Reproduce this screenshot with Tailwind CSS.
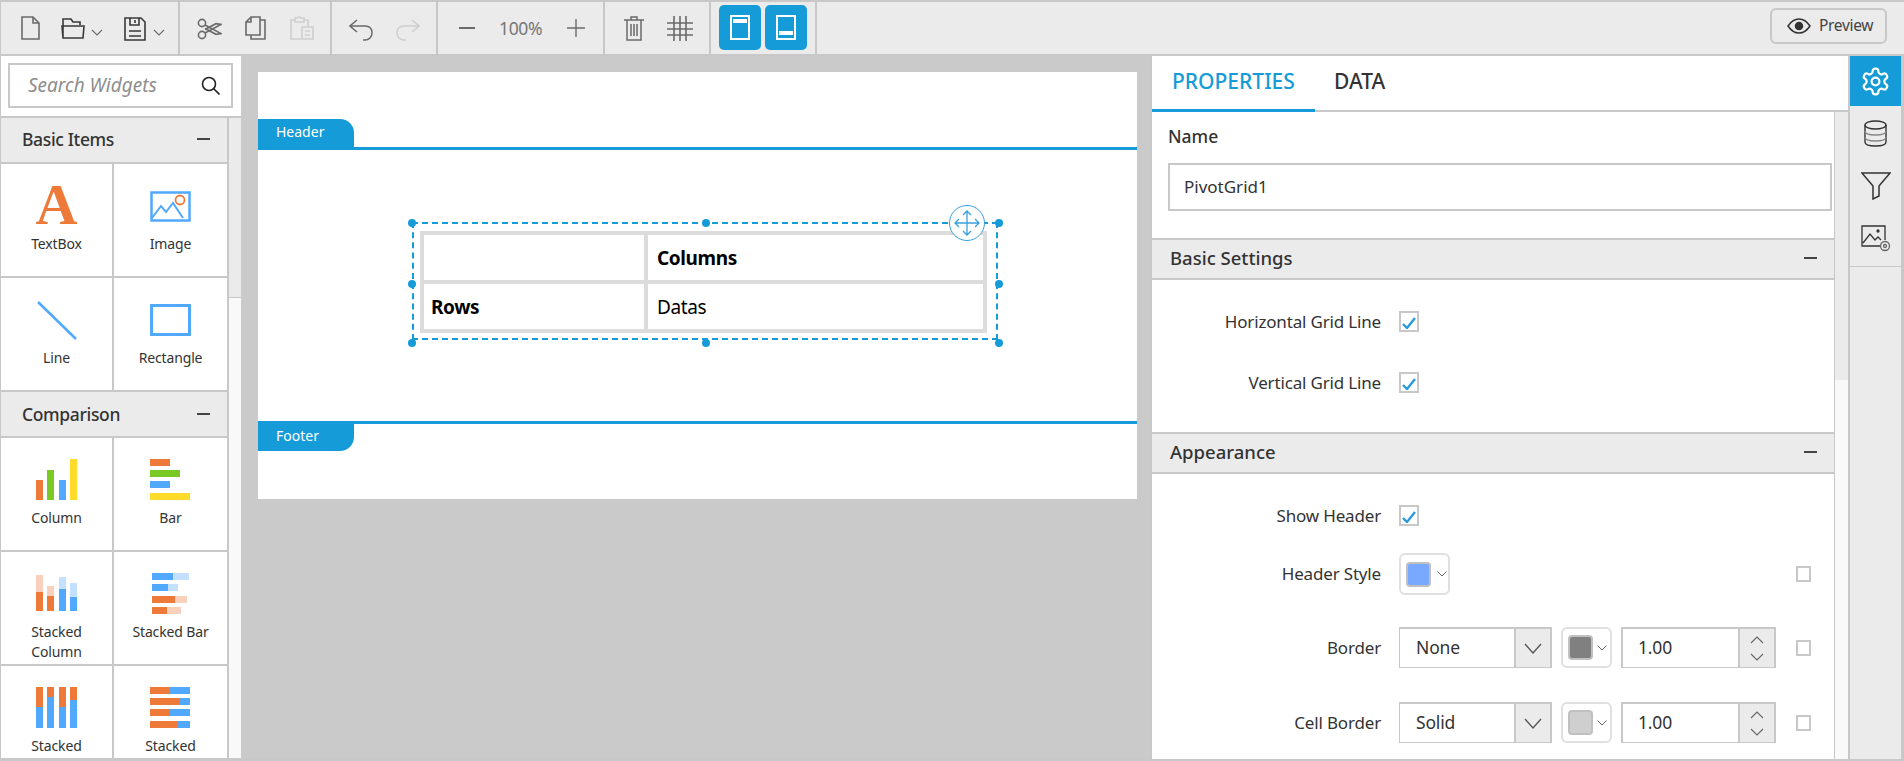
<!doctype html>
<html>
<head>
<meta charset="utf-8">
<script src="https://cdn.jsdelivr.net/npm/@tailwindcss/browser@4"></script>
</head>
<body class="m-0">
<div class="w-[1904px] h-[761px] overflow-hidden flex flex-col bg-[#c8c8c8] text-[#333] [font-family:'Noto_Sans',sans-serif]">
  <!-- toolbar -->
  <div class="h-[52px] mt-[2px] shrink-0 flex bg-[#ebebeb] text-[#6b6b6b] border-l border-[#c8c8c8]">
    <div class="w-[179px] relative border-r-2 border-[#c8c8c8] flex items-start">
      <svg class="mt-[14px] ml-[20px]" width="19" height="24" viewBox="0 0 19 24" fill="none" stroke="#6b6b6b" stroke-width="1.6"><path d="M1 1h11l6 6v16H1zM12 1v6h6"/></svg>
      <svg class="mt-[15px] ml-[21px]" width="24" height="22" viewBox="0 0 24 22" fill="none" stroke="#3a3a3a" stroke-width="1.6"><path d="M2 20V2h8l2 3h7v3M1 9h22l-1 12H2z"/></svg>
      <svg class="mt-[27px] ml-[6px]" width="12" height="7" viewBox="0 0 12 7" fill="none" stroke="#6b6b6b" stroke-width="1.1"><path d="M1 1l5 5 5-5"/></svg>
      <svg class="mt-[15px] ml-[21px]" width="22" height="24" viewBox="0 0 22 24" fill="none" stroke="#3a3a3a" stroke-width="1.6"><path d="M1 1h16l4 4v18H1zM6 1v7h9V1M11 3v3M5 14h12M5 19h12"/></svg>
      <svg class="mt-[27px] ml-[7px]" width="12" height="7" viewBox="0 0 12 7" fill="none" stroke="#6b6b6b" stroke-width="1.1"><path d="M1 1l5 5 5-5"/></svg>
    </div>
    <div class="w-[152px] border-r-2 border-[#c8c8c8] flex items-start">
      <svg class="mt-[16px] ml-[17px]" width="25" height="22" viewBox="0 0 25 22" fill="none" stroke="#6b6b6b" stroke-width="1.6"><circle cx="5" cy="5" r="3.6"/><circle cx="5" cy="17" r="3.6"/><path d="M8 7l16 8.5-5 .8L8 10.5M8 15l16-8.5-5-.8L8 11.5"/></svg>
      <svg class="mt-[14px] ml-[23px]" width="21" height="24" viewBox="0 0 21 24" fill="none" stroke="#6b6b6b" stroke-width="1.6"><path d="M1 6l5-5h9v18H1zM6 1v5H1M15 4h5v19H6v-4"/></svg>
      <svg class="mt-[14px] ml-[24px]" width="24" height="24" viewBox="0 0 24 24" fill="none" stroke="#cfcfcf" stroke-width="1.6"><path d="M5 4H1v19h11M14 4h4v7M5 2h3l1-1h1l1 1h3v4H5zM12 11h11v12H12zM15 15h5M15 19h5"/></svg>
    </div>
    <div class="w-[106px] border-r-2 border-[#c8c8c8] flex items-start">
      <svg class="mt-[17px] ml-[17px]" width="25" height="22" viewBox="0 0 25 22" fill="none" stroke="#6b6b6b" stroke-width="1.5"><path d="M8 1L1 7l7 6M1 7h15c5 0 7 3 7 7s-3 7-7 7h-2"/></svg>
      <svg class="mt-[17px] ml-[21px]" width="25" height="22" viewBox="0 0 25 22" fill="none" stroke="#cfcfcf" stroke-width="1.5"><path d="M17 1l7 6-7 6M24 7H9c-5 0-7 3-7 7s3 7 7 7h2"/></svg>
    </div>
    <div class="w-[167px] border-r-2 border-[#c8c8c8] flex items-start">
      <div class="mt-[25px] ml-[21px] w-[16px] h-[1.5px] bg-[#6b6b6b]"></div>
      <div class="mt-[14px] ml-[24px] w-[44px] text-[17.5px] leading-[24px] text-[#777] tracking-[-0.02em]">100%</div>
      <svg class="mt-[17px] ml-[24px]" width="18" height="18" viewBox="0 0 18 18" fill="none" stroke="#6b6b6b" stroke-width="1.4"><path d="M9 0v18M0 9h18"/></svg>
    </div>
    <div class="w-[106px] border-r-2 border-[#c8c8c8] flex items-start">
      <svg class="mt-[14px] ml-[19px]" width="20" height="25" viewBox="0 0 20 25" fill="none" stroke="#6b6b6b" stroke-width="1.5"><path d="M0 4h20M7 4V1h6v3M3 4v20h14V4M7 8v12M10 8v12M13 8v12"/></svg>
      <svg class="mt-[14px] ml-[23px]" width="26" height="25" viewBox="0 0 26 25" fill="none" stroke="#6b6b6b" stroke-width="1.6"><path d="M7 0v25M13 0v25M19 0v25M0 7h26M0 13h26M0 19h26"/></svg>
    </div>
    <div class="w-[106px] border-r-2 border-[#c8c8c8] flex items-start gap-[4px] pl-[8px] pt-[3px]">
      <div class="w-[42px] h-[45px] rounded-[5px] bg-[#169bd9] flex items-center justify-center">
        <div class="w-[20px] h-[25px] border-2 border-white pt-[2px] px-[1px]"><div class="h-[4px] bg-white"></div></div>
      </div>
      <div class="w-[42px] h-[45px] rounded-[5px] bg-[#169bd9] flex items-center justify-center">
        <div class="w-[20px] h-[25px] border-2 border-white pt-[14px] px-[1px]"><div class="h-[4px] bg-white"></div></div>
      </div>
    </div>
    <div class="flex-1 flex justify-end items-start pt-[6px] pr-[17px]">
      <div class="w-[117px] h-[36px] border-2 border-[#c8c8c8] rounded-[6px] flex items-center pl-[15px] gap-[8px] text-[#444]">
        <svg width="24" height="16" viewBox="0 0 24 16" fill="none" stroke="#333" stroke-width="1.5"><path d="M1 8c3-4.500 7-7 11-7s8 2.500 11 7c-3 4.500-7 7-11 7S4 12.500 1 8z"/><circle cx="12" cy="8" r="3.500" fill="#333"/></svg>
        <span class="text-[15.5px] tracking-[-0.02em]">Preview</span>
      </div>
    </div>
  </div>
  <!-- main -->
  <div class="flex mt-[2px] h-[703px] shrink-0 overflow-hidden">
    <!-- widgets panel -->
    <div class="w-[241px] shrink-0 flex flex-col border-l border-[#c8c8c8]">
      <div class="h-[60px] shrink-0 bg-white pl-[7px] pt-[7px]">
        <div class="w-[225px] h-[45px] border-2 border-[#c8c8c8] flex items-center pl-[18px] pr-[11px] justify-between">
          <span class="italic text-[19px] text-[#8e8e8e]">Search Widgets</span>
          <svg width="19" height="19" viewBox="0 0 19 19" fill="none" stroke="#222" stroke-width="1.6"><circle cx="8" cy="8" r="6.500"/><path d="M12.500 12.500l6 6"/></svg>
        </div>
      </div>
      <div class="h-[2px] shrink-0"></div>
      <div class="flex h-[640px] shrink-0 overflow-hidden">
        <div class="w-[228px] shrink-0 border-r-2 border-[#c8c8c8] flex flex-col gap-[2px] overflow-hidden text-center text-[14px] leading-[20px] tracking-[-0.01em]">
          <div class="h-[44px] shrink-0 bg-[#ebebeb] flex items-center justify-between pl-[21px] pr-[17px] pb-[2px] text-[17.5px] tracking-[-0.02em] font-medium text-left"><span>Basic Items</span><span class="w-[13px] h-[2px] bg-[#444]"></span></div>
          <div class="grid grid-cols-[111px_113px] gap-[2px] auto-rows-[112px] shrink-0">
            <div class="bg-white flex flex-col items-center pt-[18px]">
              <div class="h-[45px] text-[#ee7a3a] font-bold text-[58px] leading-[45px] tracking-normal [font-family:'Liberation_Serif',serif]">A</div>
              <div class="mt-[7px]">TextBox</div>
            </div>
            <div class="bg-white flex flex-col items-center pt-[21px]">
              <svg width="44" height="42" viewBox="0 0 44 42" fill="none"><rect x="2.500" y="7.500" width="38" height="28" stroke="#51a8ff" stroke-width="2.500"/><path d="M3 33l9-12 5 6 7-9 10 15" stroke="#51a8ff" stroke-width="2"/><circle cx="31" cy="15" r="4.500" stroke="#ee7a3a" stroke-width="1.800"/></svg>
              <div class="mt-[7px]">Image</div>
            </div>
            <div class="bg-white flex flex-col items-center pt-[21px]">
              <svg width="44" height="42" viewBox="0 0 44 42" fill="none"><path d="M3 3l38 37" stroke="#51a8ff" stroke-width="2.500"/></svg>
              <div class="mt-[7px]">Line</div>
            </div>
            <div class="bg-white flex flex-col items-center pt-[21px]">
              <svg width="44" height="42" viewBox="0 0 44 42" fill="none"><rect x="2.500" y="6.500" width="38" height="29" stroke="#51a8ff" stroke-width="3"/></svg>
              <div class="mt-[7px]">Rectangle</div>
            </div>
          </div>
          <div class="h-[44px] shrink-0 bg-[#ebebeb] flex items-center justify-between pl-[21px] pr-[17px] text-[17.5px] tracking-[-0.02em] font-medium text-left"><span>Comparison</span><span class="w-[13px] h-[2px] bg-[#444]"></span></div>
          <div class="grid grid-cols-[111px_113px] gap-[2px] auto-rows-[112px] shrink-0">
            <div class="bg-white flex flex-col items-center pt-[21px]">
              <svg width="44" height="42" viewBox="0 0 44 42"><rect x="1" y="21" width="7" height="20" fill="#ee7a3a"/><rect x="12" y="11" width="7" height="30" fill="#7ac925"/><rect x="24" y="21" width="7" height="20" fill="#51a8ff"/><rect x="35" y="0" width="7" height="41" fill="#ffdb2c"/></svg>
              <div class="mt-[7px]">Column</div>
            </div>
            <div class="bg-white flex flex-col items-center pt-[21px]">
              <svg width="44" height="42" viewBox="0 0 44 42"><rect x="1" y="0" width="20" height="7" fill="#ee7a3a"/><rect x="1" y="11" width="30" height="7" fill="#7ac925"/><rect x="1" y="22" width="20" height="7" fill="#51a8ff"/><rect x="1" y="34" width="40" height="7" fill="#ffdb2c"/></svg>
              <div class="mt-[7px]">Bar</div>
            </div>
            <div class="bg-white flex flex-col items-center pt-[21px]">
              <svg width="44" height="42" viewBox="0 0 44 42"><rect x="1" y="2" width="7" height="17" fill="#f9d0bb"/><rect x="1" y="19" width="7" height="19" fill="#ee7a3a"/><rect x="12" y="13" width="7" height="10" fill="#f9d0bb"/><rect x="12" y="23" width="7" height="15" fill="#ee7a3a"/><rect x="24" y="4" width="7" height="12" fill="#c4e0ff"/><rect x="24" y="16" width="7" height="22" fill="#51a8ff"/><rect x="35" y="10" width="7" height="14" fill="#c4e0ff"/><rect x="35" y="24" width="7" height="14" fill="#51a8ff"/></svg>
              <div class="mt-[7px] w-[70px]">Stacked Column</div>
            </div>
            <div class="bg-white flex flex-col items-center pt-[21px]">
              <svg width="44" height="42" viewBox="0 0 44 42"><rect x="3" y="0" width="21" height="7" fill="#51a8ff"/><rect x="24" y="0" width="16" height="7" fill="#c4e0ff"/><rect x="3" y="11" width="16" height="7" fill="#51a8ff"/><rect x="19" y="11" width="10" height="7" fill="#c4e0ff"/><rect x="3" y="23" width="23" height="7" fill="#ee7a3a"/><rect x="26" y="23" width="12" height="7" fill="#f9d0bb"/><rect x="3" y="34" width="15" height="7" fill="#ee7a3a"/><rect x="18" y="34" width="14" height="7" fill="#f9d0bb"/></svg>
              <div class="mt-[7px]">Stacked Bar</div>
            </div>
            <div class="bg-white flex flex-col items-center pt-[21px]">
              <svg width="44" height="42" viewBox="0 0 44 42"><rect x="1" y="0" width="7" height="20" fill="#ee7a3a"/><rect x="1" y="20" width="7" height="21" fill="#51a8ff"/><rect x="12" y="0" width="7" height="10" fill="#ee7a3a"/><rect x="12" y="10" width="7" height="31" fill="#51a8ff"/><rect x="24" y="0" width="7" height="20" fill="#ee7a3a"/><rect x="24" y="20" width="7" height="21" fill="#51a8ff"/><rect x="35" y="0" width="7" height="13" fill="#ee7a3a"/><rect x="35" y="13" width="7" height="28" fill="#51a8ff"/></svg>
              <div class="mt-[7px]">Stacked</div>
            </div>
            <div class="bg-white flex flex-col items-center pt-[21px]">
              <svg width="44" height="42" viewBox="0 0 44 42"><rect x="1" y="0" width="20" height="7" fill="#ee7a3a"/><rect x="21" y="0" width="20" height="7" fill="#51a8ff"/><rect x="1" y="11" width="30" height="7" fill="#ee7a3a"/><rect x="31" y="11" width="10" height="7" fill="#51a8ff"/><rect x="1" y="22" width="20" height="7" fill="#ee7a3a"/><rect x="21" y="22" width="20" height="7" fill="#51a8ff"/><rect x="1" y="34" width="28" height="7" fill="#ee7a3a"/><rect x="29" y="34" width="12" height="7" fill="#51a8ff"/></svg>
              <div class="mt-[7px]">Stacked</div>
            </div>
          </div>
        </div>
        <div class="w-[12px] shrink-0 bg-[#f9f9f9] flex flex-col"><div class="h-[180px] bg-[#ebebeb] border-b border-[#c8c8c8]"></div></div>
      </div>
    </div>
    <!-- canvas -->
    <div class="w-[909px] shrink-0 bg-[#cacaca] pl-[17px] pt-[16px]">
      <div class="w-[879px] h-[427px] bg-white flex flex-col">
        <div class="h-[47px] shrink-0"></div>
        <div class="h-[28px] w-[96px] shrink-0 bg-[#169bd9] rounded-tr-[14px] text-white text-[14px] leading-[26px] pl-[18px]">Header</div>
        <div class="h-[3px] shrink-0 bg-[#169bd9]"></div>
        <div class="h-[271px] shrink-0 relative pl-[162px] pt-[81px]">
          <div class="w-[567px] h-[102px] border-2 border-dotted border-[#dcdcdc] bg-[#dcdcdc] p-[1px]">
            <div class="w-full h-full grid grid-cols-[220px_1fr] grid-rows-2 gap-[4px] border-[1px] border-[#dcdcdc] text-[19px] tracking-[-0.02em] text-black">
              <div class="bg-white"></div>
              <div class="bg-white flex items-center pl-[9px] pt-[2px] font-bold">Columns</div>
              <div class="bg-white flex items-center pl-[7px] pt-[2px] font-bold">Rows</div>
              <div class="bg-white flex items-center pl-[9px] pt-[2px]">Datas</div>
            </div>
          </div>
          <!-- selection overlay -->
          <div class="absolute left-[154px] top-[72px] w-[586px] h-[118px] border-2 border-dashed border-[#169bd9]"></div>
          <div class="absolute left-[150px] top-[69px] w-[8px] h-[8px] rounded-full bg-[#169bd9]"></div>
          <div class="absolute left-[444px] top-[69px] w-[8px] h-[8px] rounded-full bg-[#169bd9]"></div>
          <div class="absolute left-[737px] top-[69px] w-[8px] h-[8px] rounded-full bg-[#169bd9]"></div>
          <div class="absolute left-[150px] top-[130px] w-[8px] h-[8px] rounded-full bg-[#169bd9]"></div>
          <div class="absolute left-[737px] top-[130px] w-[8px] h-[8px] rounded-full bg-[#169bd9]"></div>
          <div class="absolute left-[150px] top-[189px] w-[8px] h-[8px] rounded-full bg-[#169bd9]"></div>
          <div class="absolute left-[444px] top-[189px] w-[8px] h-[8px] rounded-full bg-[#169bd9]"></div>
          <div class="absolute left-[737px] top-[189px] w-[8px] h-[8px] rounded-full bg-[#169bd9]"></div>
          <div class="absolute left-[691px] top-[55px] w-[36px] h-[36px] rounded-full bg-white border border-[#3aa0dc] flex items-center justify-center">
            <svg width="26" height="26" viewBox="0 0 26 26" fill="none" stroke="#3aa0dc" stroke-width="1.300"><path d="M13 1v24M1 13h24M9 5l4-4 4 4M9 21l4 4 4-4M5 9l-4 4 4 4M21 9l4 4-4 4"/></svg>
          </div>
        </div>
        <div class="h-[3px] shrink-0 bg-[#169bd9]"></div>
        <div class="h-[27px] w-[96px] shrink-0 bg-[#169bd9] rounded-br-[14px] text-white text-[14px] leading-[24px] pl-[18px]">Footer</div>
      </div>
    </div>
    <!-- properties -->
    <div class="w-[698px] shrink-0 border-l-2 border-[#c8c8c8] bg-white flex flex-col">
      <div class="h-[56px] shrink-0 flex border-b-2 border-[#c8c8c8]">
        <div class="w-[163px] h-[56px] shrink-0 border-b-[3px] border-[#169bd9] text-[#169bd9] text-[21px] font-medium pl-[20px] leading-[50px]">PROPERTIES</div>
        <div class="pl-[19px] text-[21px] font-medium leading-[50px]">DATA</div>
      </div>
      <div class="flex flex-1 overflow-hidden">
        <div class="w-[683px] shrink-0 border-r border-[#c8c8c8] flex flex-col">
          <div class="h-[126px] shrink-0 pl-[16px] pt-[11px]">
            <div class="text-[17.5px] leading-[26px] font-medium">Name</div>
            <div class="mt-[14px] w-[664px] h-[48px] border-2 border-[#c8c8c8] pl-[14px] text-[17px] leading-[44px]">PivotGrid1</div>
          </div>
          <div class="h-[42px] shrink-0 bg-[#ebebeb] border-y-2 border-[#c8c8c8] pl-[18px] pr-[17px] pb-[2px] flex items-center justify-between text-[18.5px] font-medium"><span>Basic Settings</span><span class="w-[13px] h-[2px] bg-[#444]"></span></div>
          <div class="h-[152px] shrink-0 flex flex-col pt-[31px] gap-[40px] text-[17px] tracking-[-0.01em]">
            <div class="flex h-[21px] items-center"><div class="w-[229px] text-right">Horizontal Grid Line</div><div class="ml-[18px] w-[20px] h-[21px] border-2 border-[#c8c8c8] flex items-center justify-center"><svg class="mt-[3px]" width="14" height="12" viewBox="0 0 14 12" fill="none" stroke="#2a9bdc" stroke-width="2.400"><path d="M1 7l4 4 8-10"/></svg></div></div>
            <div class="flex h-[21px] items-center"><div class="w-[229px] text-right">Vertical Grid Line</div><div class="ml-[18px] w-[20px] h-[21px] border-2 border-[#c8c8c8] flex items-center justify-center"><svg class="mt-[3px]" width="14" height="12" viewBox="0 0 14 12" fill="none" stroke="#2a9bdc" stroke-width="2.400"><path d="M1 7l4 4 8-10"/></svg></div></div>
          </div>
          <div class="h-[42px] shrink-0 bg-[#ebebeb] border-y-2 border-[#c8c8c8] pl-[18px] pr-[17px] pb-[2px] flex items-center justify-between text-[18.5px] font-medium"><span>Appearance</span><span class="w-[13px] h-[2px] bg-[#444]"></span></div>
          <div class="flex-1 flex flex-col text-[17px] tracking-[-0.01em]">
            <div class="flex h-[21px] items-center mt-[31px]"><div class="w-[229px] text-right">Show Header</div><div class="ml-[18px] w-[20px] h-[21px] border-2 border-[#c8c8c8] flex items-center justify-center"><svg class="mt-[3px]" width="14" height="12" viewBox="0 0 14 12" fill="none" stroke="#2a9bdc" stroke-width="2.400"><path d="M1 7l4 4 8-10"/></svg></div></div>
            <div class="flex h-[42px] items-center mt-[27px]">
              <div class="w-[229px] text-right">Header Style</div>
              <div class="ml-[18px] w-[51px] h-[42px] border-2 border-[#e0e0e0] rounded-[6px] flex items-center pl-[5px] gap-[6px]"><div class="w-[25px] h-[25px] rounded-[4px] bg-[#78a8ff] border-2 border-[#c0c0c0]"></div><svg width="10" height="6" viewBox="0 0 10 6" fill="none" stroke="#666"><path d="M.5.500l4.500 4.500 4.500-4.500"/></svg></div>
              <div class="ml-[346px] w-[15px] h-[16px] border-2 border-[#c8c8c8]"></div>
            </div>
            <div class="flex h-[41px] items-center mt-[32px]">
              <div class="w-[229px] text-right">Border</div>
              <div class="ml-[18px] w-[153px] h-[41px] border-2 border-[#c8c8c8] border-l-[1px] border-b-[1px] flex"><div class="flex-1 bg-white pl-[16px] leading-[37px] text-[17.5px]">None</div><div class="w-[36px] bg-[#ebebeb] border-l-2 border-[#c8c8c8] flex items-center justify-center"><svg width="18" height="11" viewBox="0 0 18 11" fill="none" stroke="#555" stroke-width="1.300"><path d="M1 1l8 9 8-9"/></svg></div></div>
              <div class="ml-[9px] w-[51px] h-[41px] border-2 border-[#e0e0e0] rounded-[6px] flex items-center pl-[5px] gap-[4px]"><div class="w-[25px] h-[25px] rounded-[4px] bg-[#808080] border-2 border-[#c0c0c0]"></div><svg width="10" height="6" viewBox="0 0 10 6" fill="none" stroke="#666"><path d="M.5.500l4.500 4.500 4.500-4.500"/></svg></div>
              <div class="ml-[9px] w-[155px] h-[41px] border-2 border-[#c8c8c8] border-b-[1px] flex"><div class="flex-1 pl-[15px] leading-[37px] text-[17.5px]">1.00</div><div class="w-[36px] bg-[#ebebeb] border-l-2 border-[#c8c8c8] flex flex-col items-center justify-center gap-[9px]"><svg width="14" height="8" viewBox="0 0 14 8" fill="none" stroke="#666" stroke-width="1.100"><path d="M1 7l6-6 6 6"/></svg><svg width="14" height="8" viewBox="0 0 14 8" fill="none" stroke="#666" stroke-width="1.100"><path d="M1 1l6 6 6-6"/></svg></div></div>
              <div class="ml-[20px] w-[15px] h-[16px] border-2 border-[#c8c8c8]"></div>
            </div>
            <div class="flex h-[41px] items-center mt-[34px]">
              <div class="w-[229px] text-right">Cell Border</div>
              <div class="ml-[18px] w-[153px] h-[41px] border-2 border-[#c8c8c8] border-l-[1px] border-b-[1px] flex"><div class="flex-1 bg-white pl-[16px] leading-[37px] text-[17.5px]">Solid</div><div class="w-[36px] bg-[#ebebeb] border-l-2 border-[#c8c8c8] flex items-center justify-center"><svg width="18" height="11" viewBox="0 0 18 11" fill="none" stroke="#555" stroke-width="1.300"><path d="M1 1l8 9 8-9"/></svg></div></div>
              <div class="ml-[9px] w-[51px] h-[41px] border-2 border-[#e0e0e0] rounded-[6px] flex items-center pl-[5px] gap-[4px]"><div class="w-[25px] h-[25px] rounded-[4px] bg-[#cfcfcf] border-2 border-[#c0c0c0]"></div><svg width="10" height="6" viewBox="0 0 10 6" fill="none" stroke="#666"><path d="M.5.500l4.500 4.500 4.500-4.500"/></svg></div>
              <div class="ml-[9px] w-[155px] h-[41px] border-2 border-[#c8c8c8] border-b-[1px] flex"><div class="flex-1 pl-[15px] leading-[37px] text-[17.5px]">1.00</div><div class="w-[36px] bg-[#ebebeb] border-l-2 border-[#c8c8c8] flex flex-col items-center justify-center gap-[9px]"><svg width="14" height="8" viewBox="0 0 14 8" fill="none" stroke="#666" stroke-width="1.100"><path d="M1 7l6-6 6 6"/></svg><svg width="14" height="8" viewBox="0 0 14 8" fill="none" stroke="#666" stroke-width="1.100"><path d="M1 1l6 6 6-6"/></svg></div></div>
              <div class="ml-[20px] w-[15px] h-[16px] border-2 border-[#c8c8c8]"></div>
            </div>
          </div>
        </div>
        <div class="w-[13px] shrink-0 bg-[#f9f9f9]"><div class="h-[268px] bg-[#ebebeb]"></div></div>
      </div>
    </div>
    <!-- side tabs -->
    <div class="w-[55px] shrink-0 flex flex-col gap-[2px] bg-[#ebebeb] mr-[1px] border-x-2 border-[#c8c8c8]">
      <div class="h-[50px] bg-[#169bd9] flex items-center justify-center"><svg width="31" height="31" viewBox="0 0 24 24" fill="none" stroke="#fff" stroke-width="1.700"><path d="M12.220 2h-.44a2 2 0 0 0-2 2v.18a2 2 0 0 1-1 1.730l-.43.25a2 2 0 0 1-2 0l-.15-.08a2 2 0 0 0-2.730.73l-.22.38a2 2 0 0 0 .73 2.730l.15.1a2 2 0 0 1 1 1.720v.51a2 2 0 0 1-1 1.740l-.15.09a2 2 0 0 0-.73 2.730l.22.38a2 2 0 0 0 2.730.73l.15-.08a2 2 0 0 1 2 0l.43.25a2 2 0 0 1 1 1.730V20a2 2 0 0 0 2 2h.44a2 2 0 0 0 2-2v-.18a2 2 0 0 1 1-1.730l.43-.25a2 2 0 0 1 2 0l.15.08a2 2 0 0 0 2.730-.73l.22-.39a2 2 0 0 0-.73-2.730l-.15-.08a2 2 0 0 1-1-1.740v-.5a2 2 0 0 1 1-1.740l.15-.09a2 2 0 0 0 .73-2.730l-.22-.38a2 2 0 0 0-2.730-.73l-.15.08a2 2 0 0 1-2 0l-.43-.25a2 2 0 0 1-1-1.730V4a2 2 0 0 0-2-2z"/><circle cx="12" cy="12" r="3"/></svg></div>
      <div class="h-[51px] bg-[#ebebeb] flex items-center justify-center"><svg width="23" height="27" viewBox="0 0 23 27" fill="none" stroke="#333" stroke-width="1.400"><ellipse cx="11.500" cy="5" rx="10.500" ry="4"/><path d="M1 5v17c0 2.500 4.500 4 10.500 4s10.500-1.500 10.500-4V5"/><path d="M1 11c0 2.500 4.500 4 10.500 4S22 13.500 22 11M1 17c0 2.500 4.500 4 10.500 4S22 19.500 22 17" stroke="#888"/></svg></div>
      <div class="h-[50px] bg-[#ebebeb] flex items-center justify-center"><svg width="30" height="28" viewBox="0 0 30 28" fill="none" stroke="#333" stroke-width="1.500"><path d="M1 1h28L18 14v10l-6 3V14z"/></svg></div>
      <div class="h-[51px] bg-[#ebebeb] flex items-center justify-center"><svg width="30" height="28" viewBox="0 0 30 28" fill="none" stroke="#333" stroke-width="1.300"><path d="M21 21H1V1h23v14M2 18l7-9 5 6 3-3 3 3"/><circle cx="17" cy="6" r="1" fill="#333"/><circle cx="24" cy="21" r="4.500" fill="#ebebeb" stroke="#666"/><circle cx="24" cy="21" r="1.500" stroke="#666"/></svg></div>
      <div class="h-[1px] bg-[#c8c8c8]"></div>
    </div>
  </div>
</div>
</body>
</html>
